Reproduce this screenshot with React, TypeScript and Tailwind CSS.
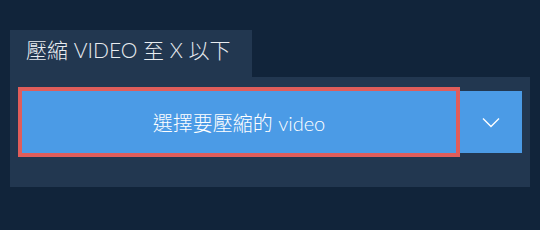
export default function App() {
  return (
    <div
      className="w-[540px] h-[230px] bg-[#11243a] pt-[30px] px-[10px]"
      style={{ fontFamily: 'Lato, "Noto Sans CJK TC", sans-serif' }}
    >
      <div className="w-[242px] h-[47px] bg-[#223750] pt-[9px] pl-[16px] text-[21px] font-light text-[#e8ecf0] leading-none">
        壓縮 VIDEO 至 X 以下
      </div>
      <div className="w-[520px] h-[110px] bg-[#223750] pt-[10px] pl-[8px] pr-[8px]">
        <div className="flex items-center">
          <button className="w-[442px] h-[70px] border-[4px] border-[#e05d5a] bg-[#4b9be6] text-white text-[20px] font-light flex items-center justify-center leading-none pt-[2px]">
            選擇要壓縮的 video
          </button>
          <button className="w-[62px] h-[62px] bg-[#4b9be6] flex items-center justify-center">
            <svg width="18" height="11" viewBox="0 0 18 11" fill="none">
              <path d="M1 1.5 L9 9.5 L17 1.5" stroke="white" strokeWidth="1.4" />
            </svg>
          </button>
        </div>
      </div>
    </div>
  );
}
